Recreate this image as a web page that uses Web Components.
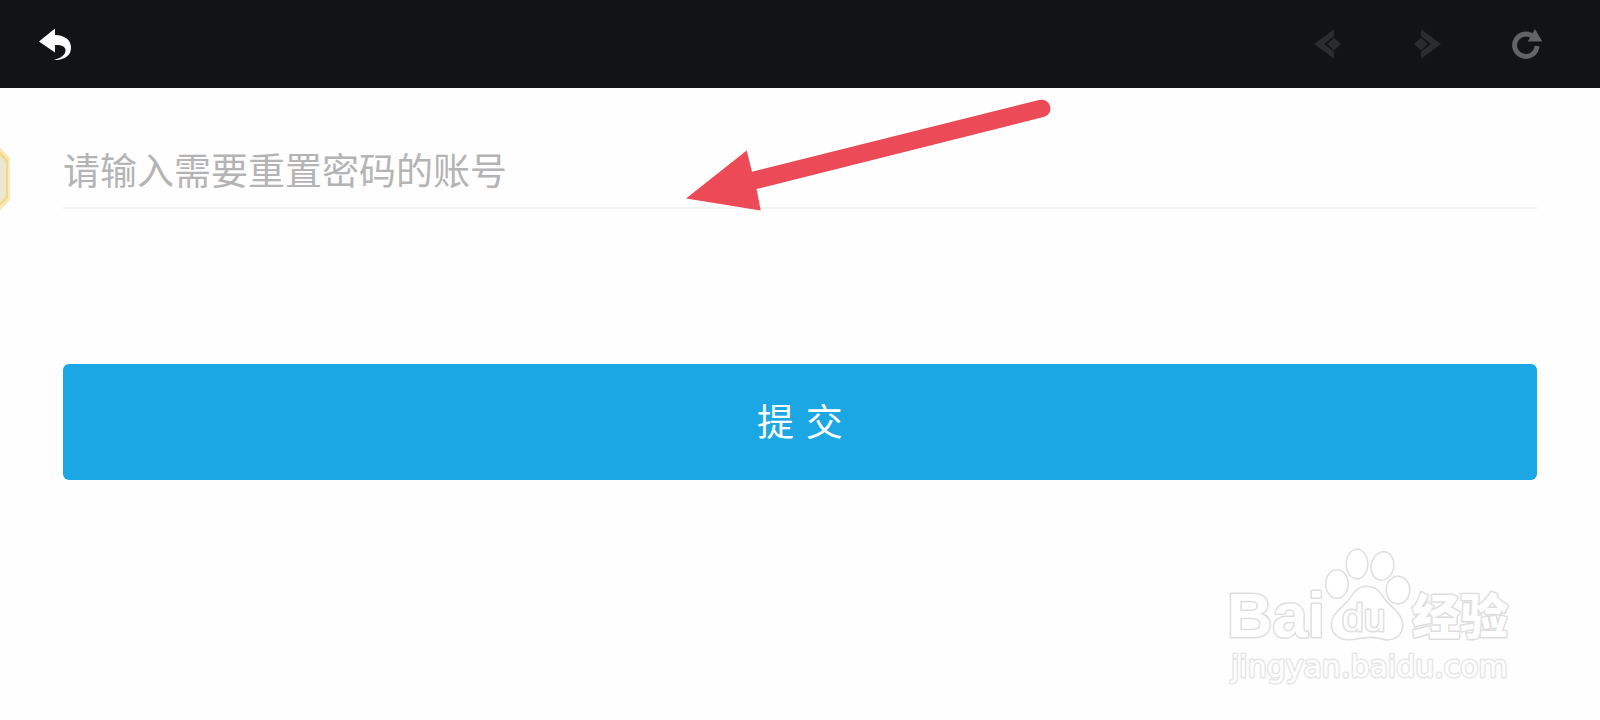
<!DOCTYPE html>
<html lang="zh-CN">
<head>
<meta charset="utf-8">
<meta name="viewport" content="width=device-width, initial-scale=1">
<title>重置密码</title>
<style>
	body {
		margin: 0;
		background: #fefefe;
		font-family: "DejaVu Sans", "Noto Sans CJK SC", sans-serif;
	}
</style>
</head>
<body>
<reset-page></reset-page>

<script>
class IconButton extends HTMLElement {
	constructor() {
		super()

		const shadow = this.attachShadow({ mode: 'open' })

		const template = document.createElement('template')
		template.innerHTML = `
		<style>
			:host {
				display: block;
				color: #2b2c2e;
			}

			button {
				display: block;
				padding: 0;
				border: 0;
				background: none;
				color: inherit;
			}

			::slotted(svg) {
				display: block;
				width: 32px;
				height: 32px;
			}
		</style>
		<button type="button"><slot></slot></button>
		`

		shadow.appendChild(template.content.cloneNode(true))

		const button = shadow.querySelector('button')
		button.setAttribute('aria-label', this.getAttribute('label'))
		button.disabled = this.hasAttribute('disabled')
	}
}

class BrowserBar extends HTMLElement {
	constructor() {
		super()

		const shadow = this.attachShadow({ mode: 'open' })

		const template = document.createElement('template')
		template.innerHTML = `
		<style>
			:host {
				display: block;
			}

			header {
				display: flex;
				align-items: center;
				justify-content: space-between;
				box-sizing: border-box;
				height: 88px;
				padding: 0 58px 0 39px;
				background: #121315;
			}

			nav {
				display: flex;
				gap: 67px;
			}

			.back {
				color: #fff;
			}

			.reload {
				color: #626365;
			}
		</style>
		<header>
			<icon-button class="back" label="返回">
				<svg viewBox="0 0 32 32" fill="currentColor">
					<path d="M0 13.5 16 .5V7C26 7.4 32 12 32 19.5 32 28 25.5 32 14 32.3 22 30 26.5 27 26.5 22.500 26.500 18.200 22.500 16.800 16 17V24.500z" />
				</svg>
			</icon-button>
			<nav>
				<icon-button label="后退" disabled>
					<svg viewBox="0 0 32 32" fill="currentColor">
						<path d="M2 16 22 1.3V8.2L12.3 16 22 23.8V30.7zM15.3 16 22 9.8 29 16 22 22.4z" />
					</svg>
				</icon-button>
				<icon-button label="前进" disabled>
					<svg viewBox="0 0 32 32" fill="currentColor">
						<path d="M30 16 10 1.3V8.2L19.7 16 10 23.8V30.7zM16.7 16 10 9.8 3 16 10 22.4z" />
					</svg>
				</icon-button>
				<icon-button class="reload" label="刷新">
					<svg viewBox="0 0 32 32" fill="currentColor">
						<path d="M27 18A11.2 11.2 0 1 1 23.4 9" fill="none" stroke="currentColor" stroke-width="5" />
						<path d="M25 1 32.3 13.5H17.7z" />
					</svg>
				</icon-button>
			</nav>
		</header>
		`

		shadow.appendChild(template.content.cloneNode(true))
	}
}

class AccountForm extends HTMLElement {
	constructor() {
		super()

		const shadow = this.attachShadow({ mode: 'open' })

		const template = document.createElement('template')
		template.innerHTML = `
		<style>
			:host {
				display: block;
				padding: 46px 63px;
			}

			form {
				display: grid;
				gap: 155px;
			}

			input,
			button {
				box-sizing: border-box;
				width: 100%;
				border: 0;
				font-family: inherit;
				font-size: 37px;
			}

			input {
				height: 75px;
				padding: 4px 0 0;
				border-bottom: 2px solid #f3f3f3;
				border-radius: 0;
				outline: none;
				background: none;
				color: #333;
			}

			input::placeholder {
				color: #b4b4b4;
				opacity: 1;
			}

			button {
				height: 116px;
				padding: 0 0 4px;
				border-radius: 6px;
				background: #1aa7e4;
				color: #fff;
			}
		</style>
		<form>
			<input type="text" name="account" aria-label="账号" placeholder="请输入需要重置密码的账号">
			<button type="submit">提 交</button>
		</form>
		`

		shadow.appendChild(template.content.cloneNode(true))

		shadow.querySelector('form').addEventListener('submit', (e) => {
			e.preventDefault()
		})
	}
}

class FloatBadge extends HTMLElement {
	constructor() {
		super()

		const shadow = this.attachShadow({ mode: 'open' })

		const template = document.createElement('template')
		template.innerHTML = `
		<style>
			:host {
				display: block;
			}

			svg {
				display: block;
			}
		</style>
		<svg width="12" height="70" viewBox="0 0 12 70">
			<path d="M-2 0 10 13V55L-2 68z" fill="#f8eab8" />
			<path d="M-2 4 8 15V53L-2 63z" fill="#f2d888" />
			<path d="M-2 8 6 17V51L-2 60z" fill="#ebe8cf" />
		</svg>
		`

		shadow.appendChild(template.content.cloneNode(true))
	}
}

class PointerArrow extends HTMLElement {
	constructor() {
		super()

		const shadow = this.attachShadow({ mode: 'open' })

		const template = document.createElement('template')
		template.innerHTML = `
		<style>
			:host {
				display: block;
			}

			svg {
				display: block;
			}
		</style>
		<svg width="368" height="118" viewBox="0 0 368 118" fill="#ec4a57">
			<path d="M1 103.4 61.7 55.6 67 76.7 355 4.8A8.8 8.8 0 0 1 359.4 21.8L71.6 94 75.7 115.4z" />
		</svg>
		`

		shadow.appendChild(template.content.cloneNode(true))
	}
}

class SiteMark extends HTMLElement {
	constructor() {
		super()

		const shadow = this.attachShadow({ mode: 'open' })

		const template = document.createElement('template')
		template.innerHTML = `
		<style>
			:host {
				display: block;
			}

			svg {
				display: block;
				fill: #fff;
				stroke: #dedede;
				stroke-width: 3px;
				stroke-linejoin: round;
				paint-order: stroke;
			}

			.latin {
				font: bold 63px "Liberation Sans", sans-serif;
			}

			.du {
				font: 39px "Liberation Sans", sans-serif;
			}

			.han {
				font: 900 48px "Noto Sans CJK SC", sans-serif;
			}

			.url {
				font: 30px "DejaVu Sans", sans-serif;
				stroke: #e6e6e6;
			}
		</style>
		<svg width="300" height="145" viewBox="0 0 300 145">
			<text class="latin" x="7" y="92">Bai</text>
			<ellipse cx="117" cy="39" rx="10.5" ry="13.5" />
			<ellipse cx="137" cy="19" rx="10" ry="14" />
			<ellipse cx="162.5" cy="21" rx="10.5" ry="13.5" transform="rotate(12 162.5 21)" />
			<ellipse cx="178" cy="45" rx="11" ry="13" />
			<path d="M147 42C155 42 159 47 163 53 168 61 182 68 182 80 182 90 174 95 165 94 156 92 152 91 147 92 140 92 136 94 129 94 119 94 112 88 112 79 112 69 124 63 131 53 135 47 139 42 147 42z" />
			<text class="du" x="122" y="86">du</text>
			<text class="han" x="192" y="89">经验</text>
			<text class="url" x="11" y="132">jingyan.baidu.com</text>
		</svg>
		`

		shadow.appendChild(template.content.cloneNode(true))
	}
}

class ResetPage extends HTMLElement {
	constructor() {
		super()

		const shadow = this.attachShadow({ mode: 'open' })

		const template = document.createElement('template')
		template.innerHTML = `
		<style>
			:host {
				display: block;
				position: relative;
				min-height: 100vh;
				overflow: hidden;
			}

			float-badge {
				position: absolute;
				top: 145px;
				left: 0;
			}

			pointer-arrow {
				position: absolute;
				top: 95px;
				left: calc(50% - 115px);
				pointer-events: none;
			}

			site-mark {
				position: absolute;
				right: 80px;
				bottom: 30px;
			}
		</style>
		<browser-bar></browser-bar>
		<main>
			<account-form></account-form>
		</main>
		<float-badge></float-badge>
		<pointer-arrow></pointer-arrow>
		<site-mark></site-mark>
		`

		shadow.appendChild(template.content.cloneNode(true))
	}
}

customElements.define('icon-button', IconButton)
customElements.define('browser-bar', BrowserBar)
customElements.define('account-form', AccountForm)
customElements.define('float-badge', FloatBadge)
customElements.define('pointer-arrow', PointerArrow)
customElements.define('site-mark', SiteMark)
customElements.define('reset-page', ResetPage)
</script>
</body>
</html>
